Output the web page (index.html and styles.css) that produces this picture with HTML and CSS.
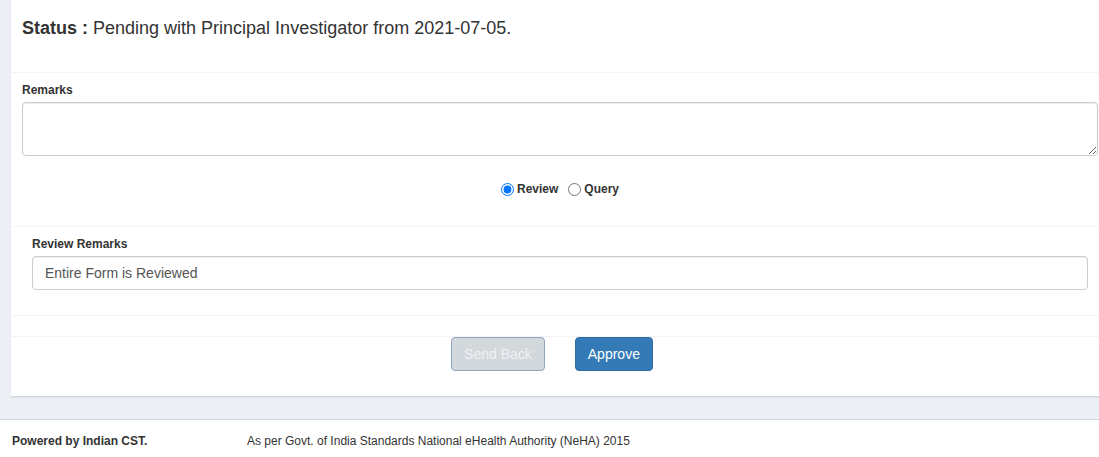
FILE: index.html
```html
<!DOCTYPE html>
<html lang="en">
<head>
    <meta charset="UTF-8">
    <meta name="viewport" content="width=device-width, initial-scale=1.0">
    <link rel="stylesheet" href="styles.css">
    <title>Review</title>
</head>
<body>
    <div class="content">
        <div class="panel">
            <div class="status"><b>Status :</b> Pending with Principal Investigator from 2021-07-05.</div>

            <div class="remarks">
                <label class="lbl" for="remarks">Remarks</label>
                <textarea id="remarks" class="area"></textarea>
                <div class="choice">
                    <label><input type="radio" name="act" checked> Review</label>
                    <label><input type="radio" name="act"> Query</label>
                </div>
            </div>

            <div class="review">
                <label class="lbl" for="revrem">Review Remarks</label>
                <input id="revrem" class="field" type="text" value="Entire Form is Reviewed">
            </div>

            <div class="spacer"></div>

            <div class="butto">
                <button class="btn back" disabled>Send Back</button>
                <button class="btn ok">Approve</button>
            </div>
        </div>
    </div>

    <footer class="foot">
        <b>Powered by Indian CST.</b>
        <span>As per Govt. of India Standards National eHealth Authority (NeHA) 2015</span>
    </footer>
</body>
</html>
```

FILE: styles.css
```css
body {
    margin: 0;
    background-color: #ecf0f5;
    color: #333;
    font-family: "Liberation Sans", Arial, sans-serif;
    font-size: 14px;
}
.content {
    padding-left: 11px;
    padding-bottom: 22px;
}
.panel {
    background-color: #fff;
    border-bottom: 1px solid #d2d6de;
    box-shadow: 0 1px 1px rgba(0, 0, 0, 0.05);
}
.status {
    height: 54px;
    padding-top: 18px;
    font-size: 18px;
    line-height: 20px;
    padding-left: 11px;
    border-bottom: 1px solid #f4f4f4;
}
.lbl {
    display: block;
    font-size: 12px;
    font-weight: bold;
    line-height: 15px;
    margin-bottom: 4px;
}
.remarks {
    padding: 10px 1px 0 11px;
    height: 143px;
    border-bottom: 1px solid #f4f4f4;
}
.area {
    display: block;
    box-sizing: border-box;
    width: 100%;
    height: 54px;
    border: 1px solid #ccc;
    border-radius: 4px;
    box-shadow: inset 0 1px 1px rgba(0, 0, 0, 0.075);
    font-family: inherit;
    font-size: 14px;
    margin: 0;
}
.choice {
    display: flex;
    justify-content: center;
    gap: 10px;
    margin-top: 26px;
    font-size: 12px;
    font-weight: bold;
}
.choice label {
    display: flex;
    align-items: center;
}
.choice input {
    margin: 0 3px 0 0;
    width: 13px;
    height: 13px;
}
.review {
    padding: 10px 11px 0 21px;
    height: 78px;
    border-bottom: 1px solid #f4f4f4;
}
.field {
    display: block;
    box-sizing: border-box;
    width: 100%;
    height: 34px;
    padding: 6px 12px;
    border: 1px solid #ccc;
    border-radius: 4px;
    box-shadow: inset 0 1px 1px rgba(0, 0, 0, 0.075);
    font-family: inherit;
    font-size: 14px;
    color: #555;
}
.spacer {
    height: 20px;
    border-bottom: 1px solid #f4f4f4;
}
.butto {
    display: flex;
    justify-content: center;
    gap: 30px;
    padding-right: 6px;
    height: 59px;
}
.btn {
    height: 34px;
    padding: 6px 12px;
    border-radius: 4px;
    font-family: inherit;
    font-size: 14px;
    line-height: 20px;
}
.back {
    background-color: #d3d8dd;
    border: 1px solid #8ea5bd;
    color: #eef1f4;
}
.ok {
    background-color: #337ab7;
    border: 1px solid #2e6da4;
    color: #fff;
    cursor: pointer;
}
.foot {
    display: flex;
    background-color: #fff;
    border-top: 1px solid #d2d6de;
    height: 38px;
    align-items: center;
    padding-left: 12px;
    padding-top: 5px;
    font-size: 12px;
    box-sizing: border-box;
}
.foot b {
    width: 235px;
}
```
